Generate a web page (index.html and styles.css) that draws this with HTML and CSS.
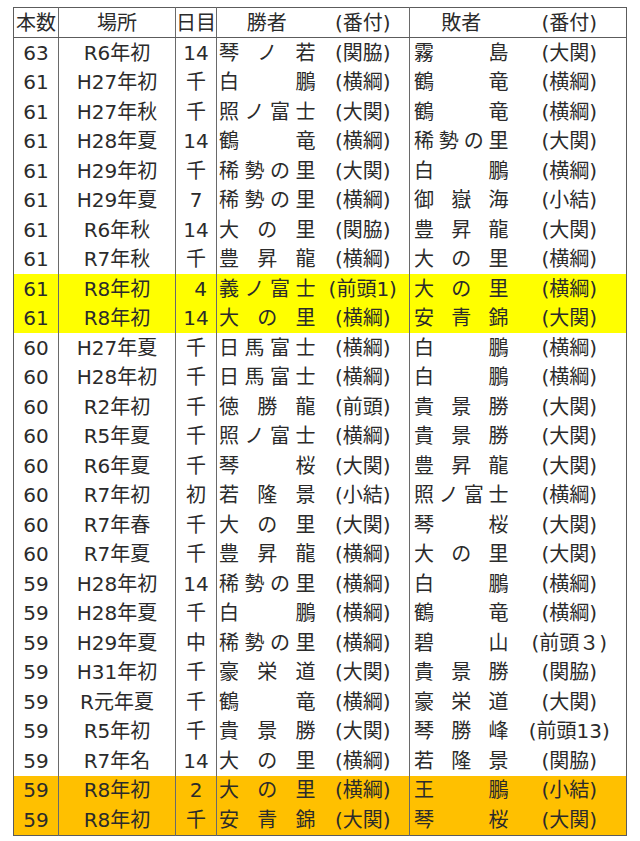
FILE: index.html
```html
<!DOCTYPE html>
<html lang="ja">
<head>
<meta charset="utf-8">
<title>本数ランキング</title>
<link rel="stylesheet" href="styles.css">
</head>
<body>
<table class="bouts">
<colgroup>
<col class="c-num"><col class="c-basho"><col class="c-day"><col class="c-wname"><col class="c-wrank"><col class="c-lname"><col class="c-lrank">
</colgroup>
<thead>
<tr><th class="sep">本数</th><th class="sep">場所</th><th class="sep">日目</th><th class="wn">勝者</th><th class="rk sep">(番付)</th><th class="ln">敗者</th><th class="rk">(番付)</th></tr>
</thead>
<tbody>
<tr><td>63</td><td>R6年初</td><td>14</td><td class="wn">琴ノ若</td><td class="rk">(関脇)</td><td class="ln">霧島</td><td class="rk">(大関)</td></tr>
<tr><td>61</td><td>H27年初</td><td>千</td><td class="wn">白鵬</td><td class="rk">(横綱)</td><td class="ln">鶴竜</td><td class="rk">(横綱)</td></tr>
<tr><td>61</td><td>H27年秋</td><td>千</td><td class="wn">照ノ富士</td><td class="rk">(大関)</td><td class="ln">鶴竜</td><td class="rk">(横綱)</td></tr>
<tr><td>61</td><td>H28年夏</td><td>14</td><td class="wn">鶴竜</td><td class="rk">(横綱)</td><td class="ln">稀勢の里</td><td class="rk">(大関)</td></tr>
<tr><td>61</td><td>H29年初</td><td>千</td><td class="wn">稀勢の里</td><td class="rk">(大関)</td><td class="ln">白鵬</td><td class="rk">(横綱)</td></tr>
<tr><td>61</td><td>H29年夏</td><td>7</td><td class="wn">稀勢の里</td><td class="rk">(横綱)</td><td class="ln">御嶽海</td><td class="rk">(小結)</td></tr>
<tr><td>61</td><td>R6年秋</td><td>14</td><td class="wn">大の里</td><td class="rk">(関脇)</td><td class="ln">豊昇龍</td><td class="rk">(大関)</td></tr>
<tr><td>61</td><td>R7年秋</td><td>千</td><td class="wn">豊昇龍</td><td class="rk">(横綱)</td><td class="ln">大の里</td><td class="rk">(横綱)</td></tr>
<tr class="hl-yellow"><td>61</td><td>R8年初</td><td class="day-r">4</td><td class="wn">義ノ富士</td><td class="rk">(前頭1)</td><td class="ln">大の里</td><td class="rk">(横綱)</td></tr>
<tr class="hl-yellow"><td>61</td><td>R8年初</td><td>14</td><td class="wn">大の里</td><td class="rk">(横綱)</td><td class="ln">安青錦</td><td class="rk">(大関)</td></tr>
<tr><td>60</td><td>H27年夏</td><td>千</td><td class="wn">日馬富士</td><td class="rk">(横綱)</td><td class="ln">白鵬</td><td class="rk">(横綱)</td></tr>
<tr><td>60</td><td>H28年初</td><td>千</td><td class="wn">日馬富士</td><td class="rk">(横綱)</td><td class="ln">白鵬</td><td class="rk">(横綱)</td></tr>
<tr><td>60</td><td>R2年初</td><td>千</td><td class="wn">徳勝龍</td><td class="rk">(前頭)</td><td class="ln">貴景勝</td><td class="rk">(大関)</td></tr>
<tr><td>60</td><td>R5年夏</td><td>千</td><td class="wn">照ノ富士</td><td class="rk">(横綱)</td><td class="ln">貴景勝</td><td class="rk">(大関)</td></tr>
<tr><td>60</td><td>R6年夏</td><td>千</td><td class="wn">琴桜</td><td class="rk">(大関)</td><td class="ln">豊昇龍</td><td class="rk">(大関)</td></tr>
<tr><td>60</td><td>R7年初</td><td>初</td><td class="wn">若隆景</td><td class="rk">(小結)</td><td class="ln">照ノ富士</td><td class="rk">(横綱)</td></tr>
<tr><td>60</td><td>R7年春</td><td>千</td><td class="wn">大の里</td><td class="rk">(大関)</td><td class="ln">琴桜</td><td class="rk">(大関)</td></tr>
<tr><td>60</td><td>R7年夏</td><td>千</td><td class="wn">豊昇龍</td><td class="rk">(横綱)</td><td class="ln">大の里</td><td class="rk">(大関)</td></tr>
<tr><td>59</td><td>H28年初</td><td>14</td><td class="wn">稀勢の里</td><td class="rk">(横綱)</td><td class="ln">白鵬</td><td class="rk">(横綱)</td></tr>
<tr><td>59</td><td>H28年夏</td><td>千</td><td class="wn">白鵬</td><td class="rk">(横綱)</td><td class="ln">鶴竜</td><td class="rk">(横綱)</td></tr>
<tr><td>59</td><td>H29年夏</td><td>中</td><td class="wn">稀勢の里</td><td class="rk">(横綱)</td><td class="ln">碧山</td><td class="rk">(前頭３)</td></tr>
<tr><td>59</td><td>H31年初</td><td>千</td><td class="wn">豪栄道</td><td class="rk">(大関)</td><td class="ln">貴景勝</td><td class="rk">(関脇)</td></tr>
<tr><td>59</td><td>R元年夏</td><td>千</td><td class="wn">鶴竜</td><td class="rk">(横綱)</td><td class="ln">豪栄道</td><td class="rk">(大関)</td></tr>
<tr><td>59</td><td>R5年初</td><td>千</td><td class="wn">貴景勝</td><td class="rk">(大関)</td><td class="ln">琴勝峰</td><td class="rk">(前頭13)</td></tr>
<tr><td>59</td><td>R7年名</td><td>14</td><td class="wn">大の里</td><td class="rk">(横綱)</td><td class="ln">若隆景</td><td class="rk">(関脇)</td></tr>
<tr class="hl-orange"><td>59</td><td>R8年初</td><td>2</td><td class="wn">大の里</td><td class="rk">(横綱)</td><td class="ln">王鵬</td><td class="rk">(小結)</td></tr>
<tr class="hl-orange"><td>59</td><td>R8年初</td><td>千</td><td class="wn">安青錦</td><td class="rk">(大関)</td><td class="ln">琴桜</td><td class="rk">(大関)</td></tr>
</tbody>
</table>
</body>
</html>
```

FILE: styles.css
```css
html, body {
  margin: 0;
  padding: 0;
  background: #ffffff;
}

body {
  padding: 7px 0 0 13px;
  font-family: "DejaVu Sans", "Noto Sans CJK JP", sans-serif;
  font-size: 20px;
  color: #2b2b2b;
}

.bouts {
  border-collapse: collapse;
  table-layout: fixed;
  width: 614px;
  border: 1px solid #5c5c5c;
}

.c-num { width: 45px; }
.c-basho { width: 117px; }
.c-day { width: 41px; }
.c-wname { width: 100px; }
.c-wrank { width: 93px; }
.c-lname { width: 103px; }
.c-lrank { width: 114px; }

.bouts th,
.bouts td {
  padding: 0;
  text-align: center;
  vertical-align: middle;
  line-height: 22px;
  white-space: nowrap;
  font-weight: normal;
}

.bouts th {
  height: 29px;
  border-bottom: 1px solid #5c5c5c;
}

.bouts td {
  height: 29.5px;
}

/* vertical separators: after 本数, 場所, 日目, winner rank */
.bouts tr > :nth-child(1),
.bouts tr > :nth-child(2),
.bouts tr > :nth-child(3),
.bouts tr > :nth-child(5) {
  border-right: 1px solid #6a6a6a;
}

.bouts th.wn,
.bouts th.ln {
  text-align: center;
}

.bouts td.wn {
  text-align: justify;
  text-align-last: justify;
  text-justify: inter-character;
  padding: 0 1px 0 2px;
}

.bouts td.ln {
  text-align: justify;
  text-align-last: justify;
  text-justify: inter-character;
  padding: 0 4px 0 4px;
}

.bouts td.day-r {
  text-align: right;
  padding-right: 9px;
}

.hl-yellow td {
  background: #ffff00;
}

.hl-orange td {
  background: #ffc000;
}
```
